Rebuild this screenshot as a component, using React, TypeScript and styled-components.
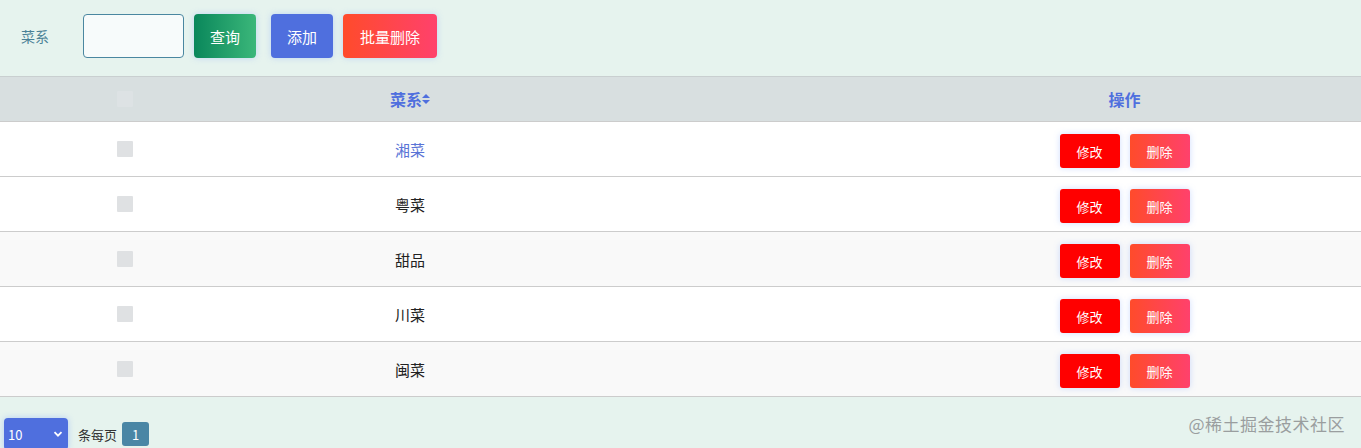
import styled, { createGlobalStyle } from 'styled-components';

const GlobalStyle = createGlobalStyle`
  html, body {
    margin: 0;
    padding: 0;
    background: #e6f3ee;
    font-family: "Noto Sans CJK SC", "Noto Sans", sans-serif;
  }
`;

const Page = styled.div`
  width: 1361px;
  height: 448px;
  overflow: hidden;
  position: relative;
  background: #e6f3ee;
`;

const Toolbar = styled.div`
  display: flex;
  align-items: center;
  height: 76px;
  padding: 0 0 4px 21px;
  box-sizing: border-box;
`;

const Label = styled.span`
  font-size: 14px;
  color: #4a8196;
  margin-right: 34px;
`;

const SearchInput = styled.input`
  width: 101px;
  height: 44px;
  box-sizing: border-box;
  border: 1px solid #4a87a0;
  border-radius: 4px;
  background: #f7fbfb;
  margin: 0 10px 0 0;
  outline: none;
`;

const ToolBtn = styled.button<{ $bg: string; $w: number; $ml?: number }>`
  width: ${({ $w }) => $w}px;
  height: 44px;
  margin-left: ${({ $ml }) => $ml ?? 0}px;
  border: none;
  border-radius: 4px;
  background: ${({ $bg }) => $bg};
  color: #fff;
  font-family: inherit;
  font-size: 15px;
  box-shadow: 0 0 6px rgb(120 160 255 / 35%);
  cursor: pointer;
`;

const Table = styled.div`
  width: 100%;
  border-top: 1px solid #c9cfd0;
`;

const Row = styled.div<{ $bg: string; $h: number }>`
  display: grid;
  grid-template-columns: 250px 320px 318px 1fr;
  align-items: center;
  box-sizing: border-box;
  height: ${({ $h }) => $h}px;
  background: ${({ $bg }) => $bg};
  border-bottom: 1px solid #cccccc;
`;

const Cell = styled.div<{ $pt?: number }>`
  display: flex;
  justify-content: center;
  align-items: center;
  gap: 10px;
  padding-top: ${({ $pt }) => $pt ?? 0}px;
`;

const HeadText = styled.span`
  font-size: 16px;
  font-weight: 700;
  color: #4f6fde;
  display: flex;
  align-items: center;
`;

const Check = styled.span<{ $faint?: boolean }>`
  width: 16px;
  height: 16px;
  background: ${({ $faint }) => ($faint ? '#dde2e4' : '#dfe1e3')};
  border-radius: 1px;
`;

const Name = styled.span<{ $hover?: boolean }>`
  font-size: 15px;
  color: ${({ $hover }) => ($hover ? '#5a74d6' : '#222')};
`;

const ActBtn = styled.button<{ $bg: string }>`
  width: 60px;
  height: 34px;
  border: none;
  border-radius: 3px;
  background: ${({ $bg }) => $bg};
  color: #fff;
  font-family: inherit;
  font-size: 13px;
  box-shadow: 0 0 6px rgb(120 160 255 / 35%);
`;

const Footer = styled.div`
  display: flex;
  align-items: center;
  padding: 21px 0 0 4px;
  gap: 10px;
`;

const PageSize = styled.div`
  width: 64px;
  height: 32px;
  box-sizing: border-box;
  background: #4f6fde;
  border-radius: 4px;
  color: #fff;
  font-size: 13px;
  display: flex;
  align-items: center;
  justify-content: space-between;
  padding: 0 5px 0 4px;
  box-shadow: 0 0 6px rgb(120 160 255 / 45%);
`;

const PerPage = styled.span`
  font-size: 13px;
  color: #333;
  margin-right: -6px;
`;

const PageNum = styled.span`
  width: 27px;
  height: 24px;
  background: #4a86a5;
  border-radius: 3px;
  color: #fff;
  font-size: 13px;
  display: flex;
  align-items: center;
  justify-content: center;
  margin-left: 1px;
`;

const Watermark = styled.span`
  position: absolute;
  right: 16px;
  bottom: 12px;
  font-size: 17px;
  color: #9a9e9f;
  letter-spacing: 0.5px;
`;

const SortIcon = () => (
  <svg width="8" height="12" viewBox="0 0 8 12">
    <path d="M4 1 L8 5 H0 Z M0 7 H8 L4 11 Z" fill="#4f6fde" />
  </svg>
);

const Chevron = () => (
  <svg width="10" height="10" viewBox="0 0 10 10">
    <path d="M1.5 3.2 L5 6.7 L8.5 3.2" stroke="#fff" strokeWidth="1.8" fill="none" />
  </svg>
);

const dishes = ['湘菜', '粤菜', '甜品', '川菜', '闽菜'];
const rowBg = ['#ffffff', '#ffffff', '#f9f9f9', '#ffffff', '#f9f9f9'];

export default function App() {
  return (
    <Page>
      <GlobalStyle />
      <Toolbar>
        <Label>菜系</Label>
        <SearchInput />
        <ToolBtn $w={62} $bg="linear-gradient(90deg, #0a875b, #3bb77a)">查询</ToolBtn>
        <ToolBtn $w={62} $ml={15} $bg="#4f6fde">添加</ToolBtn>
        <ToolBtn $w={94} $ml={10} $bg="linear-gradient(90deg, #ff4b2b, #ff416c)">批量删除</ToolBtn>
      </Toolbar>
      <Table>
        <Row $bg="#d8dfe0" $h={45}>
          <Cell><Check $faint /></Cell>
          <Cell>
            <HeadText>菜系<SortIcon /></HeadText>
          </Cell>
          <Cell />
          <Cell><HeadText>操作</HeadText></Cell>
        </Row>
        {dishes.map((d, i) => (
          <Row key={d} $bg={rowBg[i]} $h={55}>
            <Cell><Check /></Cell>
            <Cell><Name $hover={i === 0}>{d}</Name></Cell>
            <Cell />
            <Cell $pt={4}>
              <ActBtn $bg="#ff0000">修改</ActBtn>
              <ActBtn $bg="linear-gradient(90deg, #ff4b2b, #ff416c)">删除</ActBtn>
            </Cell>
          </Row>
        ))}
      </Table>
      <Footer>
        <PageSize>10<Chevron /></PageSize>
        <PerPage>条每页</PerPage>
        <PageNum>1</PageNum>
      </Footer>
      <Watermark>@稀土掘金技术社区</Watermark>
    </Page>
  );
}
